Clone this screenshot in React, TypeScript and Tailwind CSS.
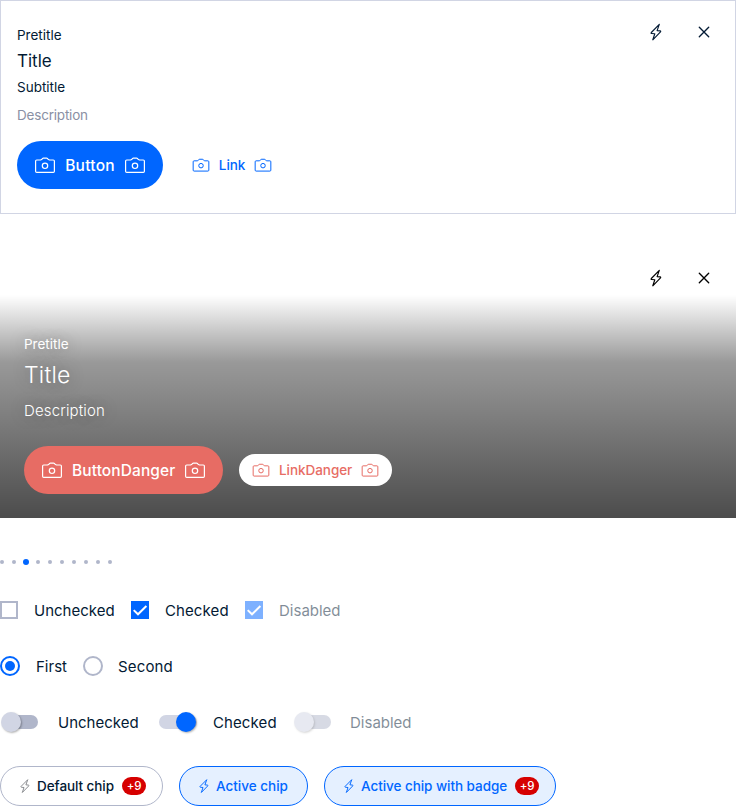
import React from "react";
import { clsx } from "clsx";

type IconProps = { className?: string };

function Bolt({ className }: IconProps) {
  return (
    <svg viewBox="0 0 24 24" fill="none" stroke="currentColor" strokeLinejoin="round" strokeWidth="1.15" className={className}>
      <path d="M15.3 4.4 7.3 12.5Q6.7 13.4 7.7 13.5L10.8 13.8 8.8 19.8 16.5 11.9Q17.1 11 16.1 10.9L13.1 10.6Z" />
    </svg>
  );
}

function Close({ className }: IconProps) {
  return (
    <svg viewBox="0 0 24 24" fill="none" stroke="currentColor" strokeLinecap="round" strokeWidth="1.35" className={className}>
      <path d="M7.3 7.3l9.4 9.4M16.7 7.3l-9.4 9.4" />
    </svg>
  );
}

function Camera({ className }: IconProps) {
  return (
    <svg viewBox="0 0 24 24" fill="none" stroke="currentColor" strokeLinejoin="round" strokeWidth="1.2" className={className}>
      <path d="M3.7 7H7.5L9 6.2Q9.3 5.1 10.4 5.1H13.6Q14.7 5.1 15 6.2L16.5 7H20.3Q21.4 7 21.4 8.1V18.2Q21.4 19.3 20.3 19.3H3.7Q2.6 19.3 2.6 18.2V8.1Q2.6 7 3.7 7Z" />
      <circle cx="12" cy="12.8" r="2.7" />
    </svg>
  );
}

function CardActions() {
  return (
    <div className="flex items-start gap-6">
      <button aria-label="Highlight"><Bolt className="size-6" /></button>
      <button aria-label="Close"><Close className="size-6" /></button>
    </div>
  );
}

function Checkbox({ checked, disabled }: { checked?: boolean; disabled?: boolean }) {
  return (
    <span className={clsx("block size-[18px] shrink-0", checked ? "bg-[#0066ff]" : "border-2 border-[#b0b6ca]", disabled && "opacity-50")}>
      {checked && (
        <svg viewBox="0 0 18 18" fill="none" stroke="white" strokeWidth="2" className="size-[18px]">
          <path d="M2.7 9.1 7 13.3 15.4 5" />
        </svg>
      )}
    </span>
  );
}

function Switch({ checked, disabled }: { checked?: boolean; disabled?: boolean }) {
  return (
    <span className={clsx("flex h-5 w-[38px] shrink-0 items-center", disabled && "opacity-50")}>
      <span className={clsx("flex h-[14px] w-full items-center rounded-full px-px", checked ? "justify-end bg-[#d1d5e4]" : "bg-[linear-gradient(90deg,transparent_4px,#b0b6ca_4px)]")}>
        <span className={clsx("size-5 shrink-0 rounded-full shadow-[1px_1px_2px_rgba(0,0,0,0.3)]", checked ? "bg-[#0066ff]" : "bg-[#d1d5e4]")} />
      </span>
    </span>
  );
}

function Badge() {
  return (
    <span className="ml-2 flex h-[18px] w-6 items-center justify-center rounded-full bg-[#d60000] pt-px text-[11.5px] font-medium tracking-[-0.2px] text-white">+9</span>
  );
}

const dots = [0, 1, 2, 3, 4, 5, 6, 7, 8, 9];

export default function App() {
  return (
    <main className="h-[806px] w-[736px] overflow-hidden bg-white font-['Inter','Liberation_Sans',sans-serif] text-[15px] text-[#031a34] whitespace-nowrap">
      <section className="flex h-[214px] justify-between border border-[#d1d5e4] pl-4">
        <div className="pt-6 text-[13.5px] leading-5">
          <p>Pretitle</p>
          <h2 className="mt-1 text-[17px] leading-6">Title</h2>
          <p className="mt-1">Subtitle</p>
          <p className="mt-2 tracking-[-0.2px] text-[#8a90a4]">Description</p>
          <div className="mt-4 flex items-center">
            <button className="flex h-12 w-[146px] items-center rounded-full bg-[#0066ff] pl-4 text-[15.5px] font-medium text-white">
              <Camera className="size-6" />
              <span className="ml-2 w-[50px] pt-0.5 tracking-[0.25px]">Button</span>
              <Camera className="ml-2 size-6" />
            </button>
            <button className="ml-[28px] flex h-8 items-center font-medium text-[#0066ff]">
              <Camera className="size-5" />
              <span className="ml-[7px] w-7 tracking-[-0.1px]">Link</span>
              <Camera className="ml-[7px] size-5" />
            </button>
          </div>
        </div>
        <div className="pt-[19px] pr-[19px]"><CardActions /></div>
      </section>

      <section className="mt-8 flex h-[272px] flex-col text-black">
        <div className="flex h-[49px] shrink-0 justify-end pt-5 pr-5"><CardActions /></div>
        <div className="h-[223px] bg-[linear-gradient(180deg,rgba(0,0,0,0)_0%,rgba(0,0,0,0.4)_30%,rgba(0,0,0,0.7)_100%)] px-6 pt-[39px] text-white">
          <div className="[text-shadow:0_0_16px_rgba(0,0,0,0.4)]">
            <p className="text-[13.5px] leading-5">Pretitle</p>
            <h2 className="mt-[5px] text-[23px] leading-8 font-light tracking-[0.2px]">Title</h2>
            <p className="mt-2 leading-6 font-light tracking-[0.15px]">Description</p>
          </div>
          <div className="mt-[23px] flex items-center gap-4">
            <button className="flex h-12 w-[199px] items-center rounded-full bg-[#e76c64] pl-4 text-[15.5px] font-medium">
              <Camera className="size-6" />
              <span className="ml-2 w-[103px] pt-0.5 tracking-[0.1px]">ButtonDanger</span>
              <Camera className="ml-2 size-6" />
            </button>
            <button className="flex h-8 w-[153px] items-center rounded-full bg-white pl-3 text-[13.5px] font-medium text-[#e76c64]">
              <Camera className="size-5" />
              <span className="ml-2 w-[73px] tracking-[-0.05px]">LinkDanger</span>
              <Camera className="ml-2 size-5" />
            </button>
          </div>
        </div>
      </section>

      <div className="mt-10 -ml-0.5 flex h-2 items-center gap-1">
        {dots.map((i) => (
          <span key={i} className="flex size-2 items-center justify-center">
            <span className={clsx("rounded-full", i === 2 ? "size-1.5 bg-[#0066ff]" : "size-1 bg-[#b0b6ca]")} />
          </span>
        ))}
      </div>

      <div className="mt-8 flex h-6 items-center">
        <Checkbox /><span className="ml-4 w-[97px] pt-0.5">Unchecked</span>
        <Checkbox checked /><span className="ml-4 w-20 pt-0.5 tracking-[0.1px]">Checked</span>
        <Checkbox checked disabled /><span className="ml-4 pt-0.5 opacity-50">Disabled</span>
      </div>

      <div className="mt-8 flex h-6 items-center">
        <span className="flex size-5 items-center justify-center rounded-full border-2 border-[#0066ff]"><span className="size-2.5 rounded-full bg-[#0066ff]" /></span>
        <span className="ml-4 w-[47px] pt-0.5">First</span>
        <span className="size-5 rounded-full border-2 border-[#b0b6ca]" />
        <span className="ml-[15px] pt-0.5 tracking-[0.15px]">Second</span>
      </div>

      <div className="mt-8 flex h-6 items-center">
        <Switch /><span className="ml-5 w-[101px] pt-0.5">Unchecked</span>
        <Switch checked /><span className="ml-4 w-20 pt-0.5 tracking-[0.1px]">Checked</span>
        <Switch disabled /><span className="ml-[19px] pt-0.5 opacity-50">Disabled</span>
      </div>

      <div className="mt-8 flex items-center gap-4 text-[13.5px] font-medium">
        <button className="flex h-10 w-[163px] items-center rounded-full border border-[#b0b6ca] pl-4">
          <Bolt className="-mx-0.5 size-5 text-[#86888c]" />
          <span className="ml-1 w-[77px] tracking-[-0.08px]">Default chip</span>
          <Badge />
        </button>
        <button className="flex h-10 w-[129px] items-center rounded-full border border-[#0066ff] bg-[#e5f0ff] pl-4 text-[#0066ff]">
          <Bolt className="-mx-0.5 size-5" />
          <span className="ml-1">Active chip</span>
        </button>
        <button className="flex h-10 w-[232px] items-center rounded-full border border-[#0066ff] bg-[#e5f0ff] pl-4 text-[#0066ff]">
          <Bolt className="-mx-0.5 size-5" />
          <span className="ml-1 w-[146px] tracking-[-0.05px]">Active chip with badge</span>
          <Badge />
        </button>
      </div>
    </main>
  );
}
